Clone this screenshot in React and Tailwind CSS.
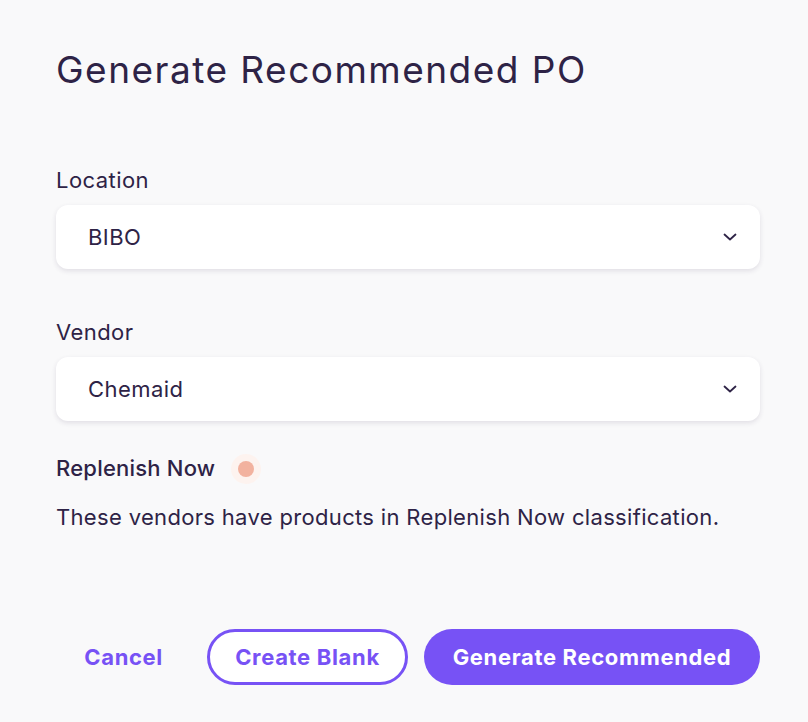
export default function App() {
  const fields = [
    { label: 'Location', value: 'BIBO' },
    { label: 'Vendor', value: 'Chemaid' },
  ];

  return (
    <div className="min-h-screen w-full bg-[#f9f9fa] pl-14 pr-12 pt-[44px] text-[#2e2346]" style={{ fontFamily: 'Inter, "Noto Sans", sans-serif' }}>
      <h1 className="text-[37px] leading-[52px] font-normal tracking-[0.04em]">Generate Recommended PO</h1>

      <div className="mt-[70px] flex flex-col gap-[49px]">
        {fields.map((f) => (
          <div key={f.label}>
            <p className="text-[22px] leading-[28px] mb-[11px] tracking-[0.02em]">{f.label}</p>
            <div className="flex h-16 items-center justify-between rounded-xl bg-white pl-8 pr-5 shadow-[0_2px_5px_rgba(46,35,70,0.12)]">
              <span className="text-[22px] tracking-[0.02em]">{f.value}</span>
              <svg width="14" height="8" viewBox="0 0 14 8" fill="none" className="mr-[3px]">
                <path d="M1.5 1.5L7 6.5L12.5 1.5" stroke="#2e2346" strokeWidth="1.8" strokeLinecap="round" strokeLinejoin="round" />
              </svg>
            </div>
          </div>
        ))}
      </div>

      <div className="mt-[31px] flex items-center gap-[16px]">
        <span className="text-[22px] font-medium tracking-[0.01em]">Replenish Now</span>
        <span className="flex h-[30px] w-[30px] items-center justify-center rounded-full bg-[#fdf3ef]">
          <span className="h-4 w-4 rounded-full bg-[#f2b29f]" />
        </span>
      </div>
      <p className="mt-[16px] text-[22px] tracking-[0.015em]">These vendors have products in Replenish Now classification.</p>

      <div className="mt-[95px] flex items-center justify-end gap-4">
        <button className="pl-5 pr-7 text-[22px] font-bold tracking-[0.03em] text-[#7752f5]">Cancel</button>
        <button className="h-14 w-[201px] rounded-full border-[3px] border-[#7752f5] bg-white text-[22px] font-bold tracking-[0.03em] text-[#7752f5]">Create Blank</button>
        <button className="h-14 w-[336px] rounded-full bg-[#7752f5] text-[22px] font-bold tracking-[0.03em] text-white">Generate Recommended</button>
      </div>
    </div>
  );
}
